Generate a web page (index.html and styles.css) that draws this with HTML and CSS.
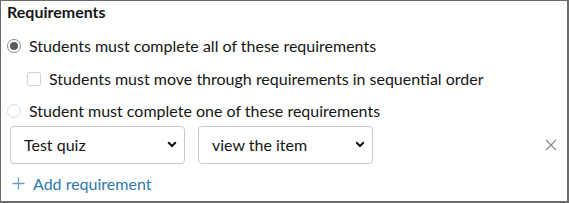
FILE: index.html
```html
<!DOCTYPE html>
<html>
<head>
<meta charset="utf-8">
<link rel="stylesheet" href="styles.css">
</head>
<body>
<div class="panel">
  <div class="title">Requirements</div>
  <div class="row opt">
    <span class="radio checked"></span>
    <span class="label">Students must complete all of these requirements</span>
  </div>
  <div class="row sub">
    <span class="check"></span>
    <span class="label">Students must move through requirements in sequential order</span>
  </div>
  <div class="row opt opt2">
    <span class="radio"></span>
    <span class="label">Student must complete one of these requirements</span>
  </div>
  <div class="reqrow">
    <div class="select">
      <span>Test quiz</span>
      <svg class="chev" width="10" height="7" viewBox="0 0 10 7"><path d="M1.2 1.3 L5 5 L8.8 1.3" fill="none" stroke="#111" stroke-width="2"/></svg>
    </div>
    <div class="select">
      <span>view the item</span>
      <svg class="chev" width="10" height="7" viewBox="0 0 10 7"><path d="M1.2 1.3 L5 5 L8.8 1.3" fill="none" stroke="#111" stroke-width="2"/></svg>
    </div>
    <svg class="remove" width="12" height="12" viewBox="0 0 12 12"><path d="M1 1 L11 11 M11 1 L1 11" stroke="#8a8a8a" stroke-width="1.3" fill="none"/></svg>
  </div>
  <div class="add">
    <svg class="plus" width="13" height="13" viewBox="0 0 13 13"><path d="M6.5 0.5 V12.5 M0.5 6.5 H12.5" stroke="#6a9ec4" stroke-width="1.3" fill="none"/></svg>
    <span>Add requirement</span>
  </div>
</div>
</body>
</html>
```
FILE: styles.css
```css
html, body { margin: 0; padding: 0; background: #fff; }
body { font-family: Lato, "Open Sans", sans-serif; color: #161616; }
.panel {
  width: 569px; height: 203px; box-sizing: border-box;
  border: 1px solid #6b6b6b; border-right-width: 2px; border-bottom-width: 2px;
  display: flex; flex-direction: column;
}
.title { height: 28px; padding-left: 6px; font-weight: 700; font-size: 16px; line-height: 22px; }
.row { display: flex; align-items: center; font-size: 16px; }
.opt { height: 33px; padding-left: 6px; }
.opt2 { height: 31px; }
.sub { height: 33px; padding-left: 26px; }
.radio {
  width: 14px; height: 14px; box-sizing: border-box; border-radius: 50%;
  border: 1px solid #dcdcdc; margin-right: 8px; position: relative; flex: none;
}
.radio.checked { border-color: #8a8a8a; }
.radio.checked::after {
  content: ""; position: absolute; left: 2px; top: 2px; width: 8px; height: 8px;
  border-radius: 50%; background: #5a5a5a;
}
.check {
  width: 14px; height: 14px; box-sizing: border-box; border: 1px solid #d4d4d4;
  border-radius: 2px; margin-right: 8px; flex: none;
}
.reqrow { height: 37px; display: flex; align-items: center; padding-left: 9px; gap: 13px; }
.select {
  width: 175px; height: 38px; box-sizing: border-box; border: 1px solid #c9c9c9; border-radius: 4px;
  display: flex; align-items: center; justify-content: space-between;
  padding: 0 7px 0 13px; font-size: 16px;
}
.remove { margin-left: auto; margin-right: 10px; }
.add { flex: 1; display: flex; align-items: center; padding-left: 11px; padding-top: 3px; gap: 8px; color: #2f79ad; font-size: 16px; }
```
